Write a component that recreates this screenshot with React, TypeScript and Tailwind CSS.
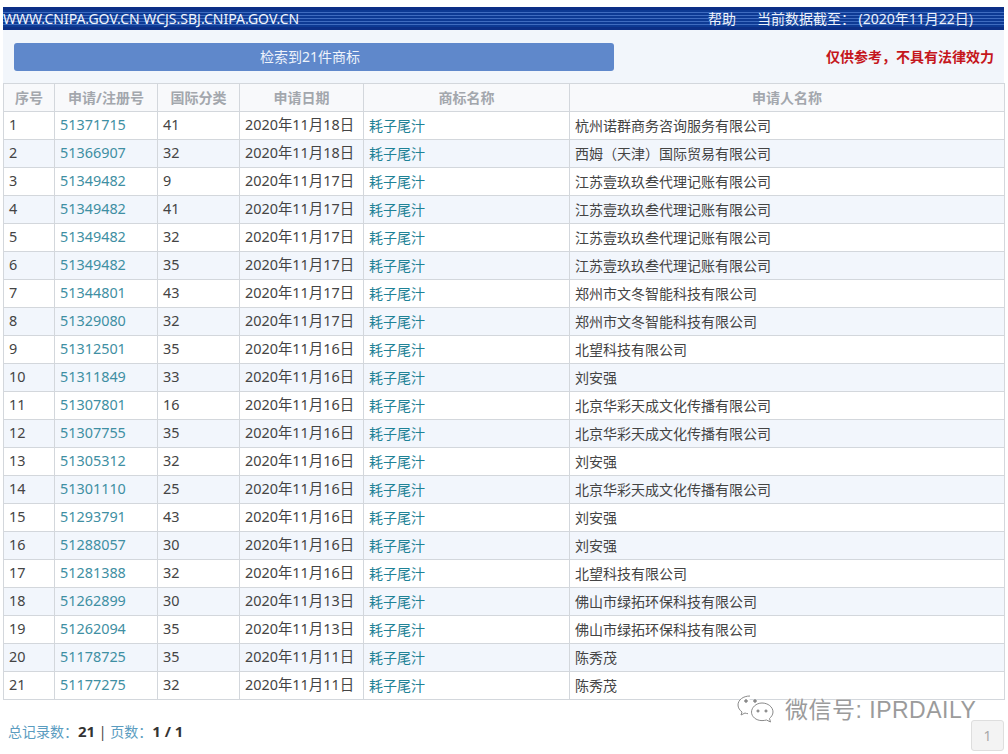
const rows: [string, string, string, string][] = [
  ["51371715", "41", "2020年11月18日", "杭州诺群商务咨询服务有限公司"],
  ["51366907", "32", "2020年11月18日", "西姆（天津）国际贸易有限公司"],
  ["51349482", "9", "2020年11月17日", "江苏壹玖玖叁代理记账有限公司"],
  ["51349482", "41", "2020年11月17日", "江苏壹玖玖叁代理记账有限公司"],
  ["51349482", "32", "2020年11月17日", "江苏壹玖玖叁代理记账有限公司"],
  ["51349482", "35", "2020年11月17日", "江苏壹玖玖叁代理记账有限公司"],
  ["51344801", "43", "2020年11月17日", "郑州市文冬智能科技有限公司"],
  ["51329080", "32", "2020年11月17日", "郑州市文冬智能科技有限公司"],
  ["51312501", "35", "2020年11月16日", "北望科技有限公司"],
  ["51311849", "33", "2020年11月16日", "刘安强"],
  ["51307801", "16", "2020年11月16日", "北京华彩天成文化传播有限公司"],
  ["51307755", "35", "2020年11月16日", "北京华彩天成文化传播有限公司"],
  ["51305312", "32", "2020年11月16日", "刘安强"],
  ["51301110", "25", "2020年11月16日", "北京华彩天成文化传播有限公司"],
  ["51293791", "43", "2020年11月16日", "刘安强"],
  ["51288057", "30", "2020年11月16日", "刘安强"],
  ["51281388", "32", "2020年11月16日", "北望科技有限公司"],
  ["51262899", "30", "2020年11月13日", "佛山市绿拓环保科技有限公司"],
  ["51262094", "35", "2020年11月13日", "佛山市绿拓环保科技有限公司"],
  ["51178725", "35", "2020年11月11日", "陈秀茂"],
  ["51177275", "32", "2020年11月11日", "陈秀茂"],
];

const heads = ["序号", "申请/注册号", "国际分类", "申请日期", "商标名称", "申请人名称"];
const widths = ["w-[51px]", "w-[103px]", "w-[82px]", "w-[124px]", "w-[206px]", "w-[435px]"];
const cell = "border border-[#d3d7dc] h-[28px] p-0 pl-[5px] align-middle font-normal leading-none";

export default function App() {
  return (
    <div className="w-[1008px] h-[754px] bg-white overflow-hidden relative font-['Noto_Sans','Noto_Sans_CJK_SC',sans-serif] text-[14px] text-[#444]">
      <div className="pt-[7px] pl-[3px] pr-[4px]">
        <div className="h-[23px] flex items-center justify-between bg-[repeating-linear-gradient(180deg,#0d3a94_0px,#0d3a94_2px,#3f6cc0_2px,#3f6cc0_3px)] border-y-[3px] border-[#0c2f86]">
          <div className="text-[#f2f5fb] text-[14px] leading-none">WWW.CNIPA.GOV.CN WCJS.SBJ.CNIPA.GOV.CN</div>
          <div className="flex gap-[21px] pr-[31px] text-[14px] leading-none text-[#eef2fa]">
            <span>帮助</span>
            <span>当前数据截至： (2020年11月22日)</span>
          </div>
        </div>
        <div className="h-[53px] bg-[#f2f6fb] flex items-center justify-between pl-[11px] pr-[10px]">
          <div className="w-[600px] h-[28px] rounded-[3px] bg-[#5f88cb] text-[#eef3fb] flex items-center justify-center pr-[8px] text-[14px] leading-none">检索到21件商标</div>
          <div className="text-[14px] leading-none font-bold text-[#c5161c]">仅供参考，不具有法律效力</div>
        </div>
        <table className="w-[1001px] border-collapse table-fixed">
          <colgroup>
            {widths.map((w, i) => (
              <col key={i} className={w} />
            ))}
          </colgroup>
          <thead>
            <tr>
              {heads.map((h) => (
                <th key={h} className="border border-[#d3d7dc] h-[28px] p-0 pt-[1px] bg-[#f8f9fb] text-center text-[14px] leading-none font-bold text-[#a3a7ad]">{h}</th>
              ))}
            </tr>
          </thead>
          <tbody>
            {rows.map((r, i) => (
              <tr key={i} className={i % 2 ? "bg-[#f2f6fc]" : "bg-white"}>
                <td className={`${cell} text-[14.4px]`}>{i + 1}</td>
                <td className={`${cell} text-[14.4px] text-[#3f8fa3]`}>{r[0]}</td>
                <td className={`${cell} text-[14.4px]`}>{r[1]}</td>
                <td className={`${cell} text-[14.4px]`}>{r[2]}</td>
                <td className={`${cell} text-[14px] text-[#1f8296]`}>耗子尾汁</td>
                <td className={`${cell} text-[14px]`}>{r[3]}</td>
              </tr>
            ))}
          </tbody>
        </table>
        <div className="flex items-start justify-between mt-[20px] pl-[5px]">
          <div className="text-[14px] leading-[22px] text-[#5a9cc0]">
            总记录数：<b className="text-[15px] text-[#333]">21</b> <span className="text-[#444]">|</span> 页数：<b className="text-[15px] text-[#333]">1 / 1</b>
          </div>
          <div className="w-[33px] h-[31px] rounded-[3px] border border-[#dedede] bg-[#f3f3f3] text-[#a8a8a8] flex items-center justify-center text-[14px]">1</div>
        </div>
      </div>
      <div className="absolute left-[736px] top-[694px] flex items-center gap-[7px] text-[#9b9b9b] text-[23px] leading-none [text-shadow:0_0_2px_white]">
        <svg width="42" height="32" viewBox="0 0 42 32" fill="#ffffff" stroke="#8a8a8a" strokeWidth="1">
          <path d="M14 2C7 2 2 6 2 11c0 3 2 5.500 4 7l-1 3 4-2c1 .4 2 .6 3 .7" />
          <path d="M26 9c6 0 11 4 11 9 0 3-2 5-3.500 6.500l1 3.500-4-2c-1.500.4-3 .6-4.500.6-6 0-10.500-4-10.500-8.500S20 9 26 9z" />
          <circle cx="10" cy="7" r="1.300" fill="#8a8a8a" />
          <circle cx="19" cy="7" r="1.300" fill="#8a8a8a" />
          <circle cx="22" cy="17" r="1.100" fill="#8a8a8a" />
          <circle cx="30" cy="17" r="1.100" fill="#8a8a8a" />
        </svg>
        <span className="font-['Liberation_Sans','Noto_Sans_CJK_SC',sans-serif] tracking-[0.5px]">微信号: IPRDAILY</span>
      </div>
    </div>
  );
}
